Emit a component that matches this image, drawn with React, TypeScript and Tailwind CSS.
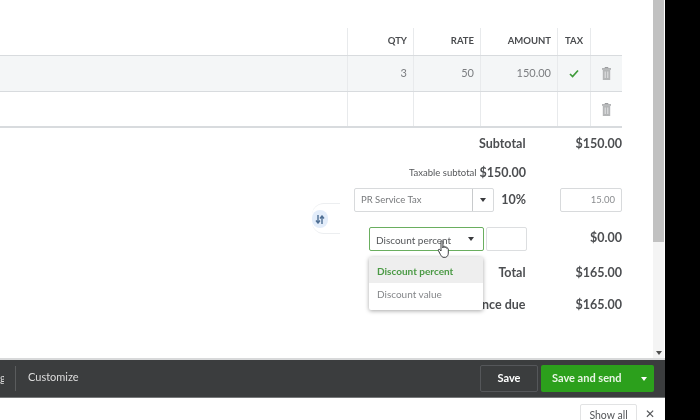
const sans = "font-['Lato','Liberation_Sans',sans-serif]";

function Trash() {
  return (
    <svg width="9" height="13" viewBox="0 0 9 13" fill="none">
      <path d="M3 1.200V0.500h3v0.700" stroke="#9a9c9e" strokeWidth="1" />
      <rect x="0" y="1.200" width="9" height="1.500" fill="#a2a4a6" />
      <rect x="0.800" y="2.700" width="7.400" height="10.300" fill="#b4b6b7" />
      <path d="M3.200 4.500v6.500M5.800 4.500v6.500" stroke="#e4e5e6" strokeWidth="1" />
    </svg>
  );
}

function Caret({ className = "border-t-[#393a3d]" }: { className?: string }) {
  return <span className={`block w-0 h-0 border-x-[3.5px] border-x-transparent border-t-[4px] ${className}`} />;
}

function Cell({ w, children, border = true }: { w: string; children?: React.ReactNode; border?: boolean }) {
  return (
    <div className={`${w} shrink-0 h-full flex items-center justify-end pr-[6px] ${border ? "border-r border-[#e8eaec]" : ""}`}>
      {children}
    </div>
  );
}

function Row({ cols, className = "", textClass = "" }: { cols: React.ReactNode[]; className?: string; textClass?: string }) {
  return (
    <div className={`flex ${className} ${textClass}`}>
      <div className="w-[348px] shrink-0 h-full border-r border-[#e8eaec]" />
      <Cell w="w-[66px]">{cols[0]}</Cell>
      <Cell w="w-[67px]">{cols[1]}</Cell>
      <Cell w="w-[77px]">{cols[2]}</Cell>
      <div className="w-[33px] shrink-0 h-full flex items-center justify-center border-r border-[#e8eaec]">{cols[3]}</div>
      <div className="w-[31px] shrink-0 h-full flex items-center justify-center">{cols[4]}</div>
    </div>
  );
}

export default function App() {
  return (
    <div className={`w-[700px] h-[420px] overflow-hidden flex bg-black ${sans} blur-[0.3px]`}>
      <div className="w-[665px] h-full flex flex-col bg-white">
        <div className="h-[360px] shrink-0 flex border-b-2 border-[#d8d9da]">
          <div className="w-[653px] relative">
            <div className="w-[622px] pt-[28px]">
              <Row
                className="h-[28px] border-b border-[#d8dbde] items-stretch"
                textClass="text-[9.5px] font-bold text-[#4a4c4f]"
                cols={["QTY", "RATE", "AMOUNT", "TAX", null]}
              />
              <Row
                className="h-[36px] border-b border-[#d8dbde] bg-[#f4f6f7]"
                textClass="text-[11px] text-[#7b7d80]"
                cols={[
                  "3",
                  "50",
                  "150.00",
                  <svg key="c" width="10" height="9" viewBox="0 0 10 9" fill="none">
                    <path d="M1 5l2.600 2.600L9 1.500" stroke="#3f9b3a" strokeWidth="1.700" />
                  </svg>,
                  <Trash key="t" />,
                ]}
              />
              <Row className="h-[36px] border-b-2 border-[#d8dbde]" cols={[null, null, null, null, <Trash key="t" />]} />
            </div>

            <div className="w-[622px] mt-[8px] text-[#4c4e51]">
              <div className="h-[16px] flex justify-end items-center text-[12.5px] font-bold">
                <span className="mr-[50px]">Subtotal</span>
                <span>$150.00</span>
              </div>

              <div className="mt-[13px] h-[16px] flex items-center justify-end pr-[96px]">
                <span className="text-[9.5px] text-[#55575a] mr-[3px]">Taxable subtotal</span>
                <span className="text-[12.5px] font-bold">$150.00</span>
              </div>

              <div className="mt-[7px] h-[24px] flex items-center">
                <div className="ml-[354px] w-[140px] h-full flex border border-[#d8dadc] rounded-[2px] text-[9.5px] text-[#77797c]">
                  <span className="flex-1 flex items-center pl-[6px] border-r border-[#c8cacc]">PR Service Tax</span>
                  <span className="w-[20px] flex items-center justify-center"><Caret /></span>
                </div>
                <span className="ml-[7px] w-[25px] text-right text-[12.5px] font-bold">10%</span>
                <span className="ml-[34px] w-[62px] h-full flex items-center justify-end pr-[6px] border border-[#d8dadc] rounded-[2px] text-[9.5px] text-[#8a8c8f]">15.00</span>
              </div>

              <div className="mt-[15px] h-[24px] flex items-center relative">
                <div className="ml-[369px] w-[115px] h-full flex items-center justify-between pl-[6px] pr-[9px] border border-[#6aae5f] rounded-[2px] text-[10px] text-[#55575a]">
                  <span className="pt-[2px]">Discount percent</span>
                  <Caret />
                </div>
                <span className="ml-[2px] w-[41px] h-full border border-[#dcdee0] rounded-[2px]" />
                <span className="ml-auto mb-[2px] text-[12.5px] font-bold">$0.00</span>
              </div>

              <div className="mt-[14px] h-[16px] flex items-center justify-end text-[12.5px] font-bold">
                <span className="mr-[50px]">Total</span>
                <span>$165.00</span>
              </div>

              <div className="mt-[16px] h-[16px] flex items-center justify-end text-[12.5px] font-bold">
                <span className="mr-[50px]">Balance due</span>
                <span>$165.00</span>
              </div>
            </div>

            {/* dropdown menu */}
            <div className="absolute left-[369px] top-[257px] w-[114px] h-[53px] bg-white rounded-[2px] shadow-[0_1px_4px_rgba(0,0,0,0.35)] text-[10px]">
              <div className="h-[26px] pt-[3px] bg-[#eeeeee] flex items-center pl-[8px] font-bold text-[#4b9a45]">Discount percent</div>
              <div className="h-[27px] pb-[4px] flex items-center pl-[8px] text-[#85878a]">Discount value</div>
            </div>

            {/* hand cursor */}
            <svg className="absolute left-[437px] top-[240px]" width="14" height="19" viewBox="0 0 14 19">
              <path
                d="M4 1.600c0-1 1.900-1 1.900 0V8l.3-1.400c.5-.8 1.600-.5 1.700.3l.1 1 .2-.7c.5-.7 1.500-.4 1.600.4v.9c.3-.6 1.500-.4 1.500.6v4c0 2-1 3.600-2.600 4.200H6c-1.200-.5-1.900-1.600-2.700-3L1.400 10.600c-.5-1 .6-1.800 1.400-1L4 11z"
                fill="#fff"
                stroke="#3c3e41"
                strokeWidth="1"
              />
            </svg>

            {/* column reorder toggle */}
            <div className="absolute left-[312px] top-[203px] w-[28px] h-[31px] border-y border-[#eceef0] rounded-l-[12px]" />
            <div className="absolute left-[312px] top-[210px] w-[16px] h-[18px] rounded-full bg-[#e3edfa] flex items-center justify-center">
              <svg width="10" height="9" viewBox="0 0 10 9" fill="none" stroke="#4f6f94" strokeWidth="1.400">
                <path d="M3 0v8M1 5.500L3 8l2-2.500" />
                <path d="M7 9V1M5 3.500L7 1l2 2.500" />
              </svg>
            </div>
          </div>

          {/* scrollbar */}
          <div className="w-[11px] mr-[1px] bg-[#f4f4f4] flex flex-col justify-between items-center">
            <div className="w-full h-[242px] bg-[#c1c1c1]" />
            <span className="mb-[3px]"><Caret className="border-t-[#505050]" /></span>
          </div>
        </div>

        {/* action bar */}
        <div className="h-[38px] shrink-0 bg-[#3b3d3e] border-b border-[#77797a] flex items-center text-[#dcdcdc]">
          <span className="text-[11px] w-[4px] overflow-hidden">g</span>
          <span className="ml-[11px] w-px h-[25px] bg-[#5a5c5d]" />
          <span className="ml-[12px] text-[11px] relative -top-[1px]">Customize</span>
          <div className="ml-auto mr-[11px] flex items-center">
            <button className="w-[58px] h-[27px] border border-[#55575a] rounded-[2px] text-[11px] font-bold text-white">Save</button>
            <div className="ml-[3px] w-[113px] h-[27px] bg-[#2ca01c] rounded-[2px] flex items-center justify-between pl-[11px] pr-[7px] text-[11px] font-bold text-[#e8f5e4]">
              <span>Save and send</span>
              <Caret className="border-t-white" />
            </div>
          </div>
        </div>

        {/* download strip */}
        <div className="h-[22px] shrink-0 overflow-hidden flex justify-end items-start pr-[10px] text-[#55575a]">
          <div className="w-[57px] h-[24px] shrink-0 mt-[6px] border border-[#e2e3e4] rounded-[2px] flex items-center justify-center text-[10.5px]">Show all</div>
          <span className="ml-[8px] mt-[10px] text-[12px] leading-[12px]">✕</span>
        </div>
      </div>
    </div>
  );
}
